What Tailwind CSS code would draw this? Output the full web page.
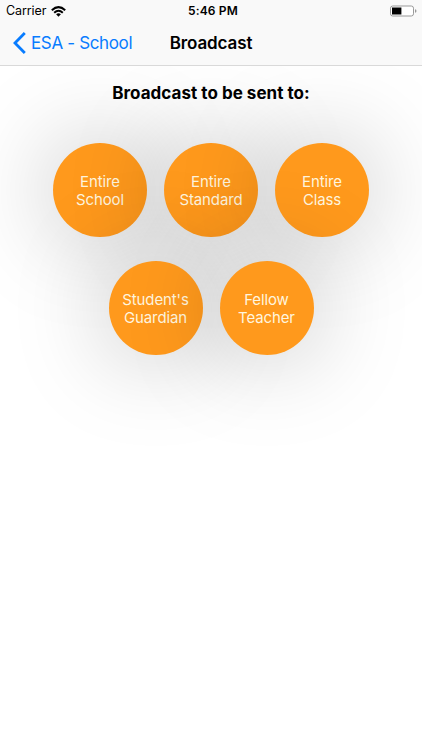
<!DOCTYPE html>
<html lang="en">
<head>
<meta charset="utf-8">
<meta name="viewport" content="width=device-width, initial-scale=1">
<title>Broadcast</title>
<script src="https://cdn.jsdelivr.net/npm/@tailwindcss/browser@4"></script>
</head>
<body class="bg-white font-['Inter','Liberation_Sans',sans-serif] text-black">
<div class="flex h-[750px] w-[422px] flex-col overflow-hidden">
  <header class="relative z-10 flex h-[66px] shrink-0 flex-col border-b border-[#d9d9d9] bg-[#f9f9f9]">
    <div class="grid h-[22px] grid-cols-3 items-center pr-[5px] pl-[6px]">
      <div class="flex items-center gap-[5px]">
        <span class="text-[12.5px] leading-[22px] tracking-[-0.1px]">Carrier</span>
        <svg class="h-[11px] w-[15px]" viewBox="0 0 15 11" fill="none" stroke="#000" stroke-width="2">
          <path d="M.8 4.2Q7.5-1.9 14.2 4.2"/><path d="M3.2 6.7Q7.5 2.8 11.8 6.7"/>
          <path d="M7.5 10.8 5.1 8.3Q7.5 6.3 9.9 8.3Z" fill="#000" stroke="none"/>
        </svg>
      </div>
      <div class="pl-[3px] text-center text-[12px] leading-[22px] font-semibold tracking-[0.15px]">5:46 PM</div>
      <svg class="h-[12px] w-[28px] justify-self-end" viewBox="0 0 28 12">
        <rect x="1.5" y="1" width="23" height="10" rx="2.2" fill="#fff" stroke="#999"/>
        <rect x="3" y="2.5" width="9.4" height="7" fill="#000"/>
        <path d="M26 4.2Q27.5 4.5 27.5 6T26 7.8Z" fill="#999"/>
      </svg>
    </div>
    <nav class="grid h-[42px] grid-cols-[1fr_auto_1fr] items-center pr-[13px] pl-[13px]">
      <a class="flex items-center gap-[5px] text-[#087cff]">
        <svg class="h-[22px] w-[13px]" viewBox="0 0 13 22" fill="none" stroke="currentColor" stroke-width="2.8"><path d="M11.8 1.1 2 11l9.8 9.9"/></svg>
        <span class="text-[17px] leading-[22px] tracking-[-0.35px] whitespace-nowrap">ESA - School</span>
      </a>
      <h1 class="text-[17px] leading-[22px] font-semibold tracking-[-0.1px]">Broadcast</h1>
      <span></span>
    </nav>
  </header>
  <main class="flex flex-1 flex-col items-center pt-[15px]">
    <h2 class="text-[17px] leading-[24px] font-bold tracking-[0.03px]">Broadcast to be sent to:</h2>
    <div class="mt-[38px] flex flex-col items-center gap-[24px] text-center text-[15px] leading-[18px] tracking-[-0.12px] text-[#fff5df]">
      <div class="flex gap-[17px]">
        <button class="flex size-[94px] items-center justify-center rounded-full bg-[#ff991c] pt-[2px] shadow-[0_0_98px_rgba(0,0,0,0.27)]">Entire<br>School</button>
        <button class="flex size-[94px] items-center justify-center rounded-full bg-[#ff991c] pt-[2px] shadow-[0_0_98px_rgba(0,0,0,0.27)]">Entire<br>Standard</button>
        <button class="flex size-[94px] items-center justify-center rounded-full bg-[#ff991c] pt-[2px] shadow-[0_0_98px_rgba(0,0,0,0.27)]">Entire<br>Class</button>
      </div>
      <div class="flex gap-[17px]">
        <button class="flex size-[94px] items-center justify-center rounded-full bg-[#ff991c] pt-[2px] shadow-[0_0_98px_rgba(0,0,0,0.27)]">Student's<br>Guardian</button>
        <button class="flex size-[94px] items-center justify-center rounded-full bg-[#ff991c] pt-[2px] shadow-[0_0_98px_rgba(0,0,0,0.27)]">Fellow<br>Teacher</button>
      </div>
    </div>
  </main>
</div>
</body>
</html>
